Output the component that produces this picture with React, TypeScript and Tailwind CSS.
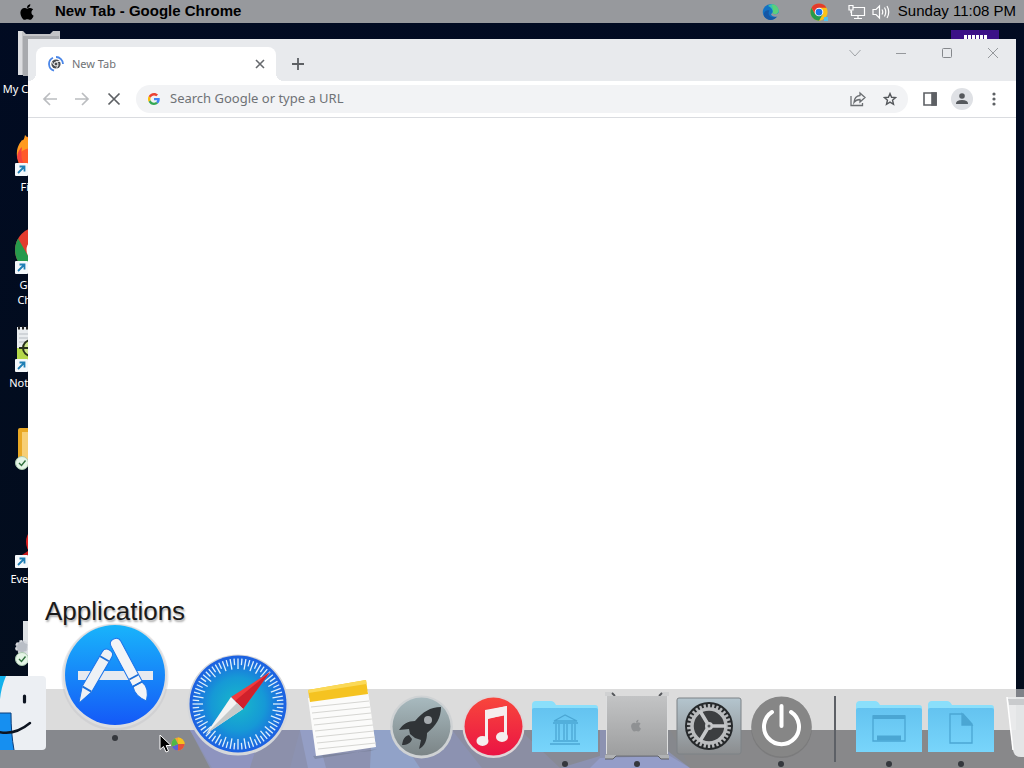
import { ReactNode, useState } from 'react';
import { FaApple } from 'react-icons/fa';

const ticks = Array.from({ length: 72 }, (_, i) => i * 5);
const teeth = Array.from({ length: 30 }, (_, i) => i * 12);

function ChromeLogo({ className }: { className?: string }) {
  return (
    <svg viewBox="0 0 48 48" className={className} aria-hidden="true">
      <circle cx="24" cy="24" r="23" fill="#fbc116" />
      <path d="M24 24 L4.1 12.5 A23 23 0 0 1 43.9 12.5 L24 12.5 Z" fill="#e33b2e" />
      <path d="M4.1 12.5 A23 23 0 0 0 24 47 L34 29.8 L24 24 L14 29.8 Z" fill="#269a4c" />
      <path d="M4.1 12.5 L14 29.8 L24 13 Z" fill="#e33b2e" />
      <circle cx="24" cy="24" r="11.5" fill="#fff" />
      <circle cx="24" cy="24" r="9" fill="#1a73e8" />
    </svg>
  );
}

function EdgeLogo({ className }: { className?: string }) {
  return (
    <svg viewBox="0 0 24 24" className={className} aria-hidden="true">
      <circle cx="11.5" cy="12" r="10.5" fill="#1272c4" />
      <path d="M8 4 C12 0 20 1 22 8 C24 13 20 16 16 15 C13 14 15 12 14 10 C13 7 11 5 8 4Z" fill="#35c1b1" />
      <path d="M13 2 C20 2 24 9 21 13 C19 16 15 15 14 13 C16 10 14 5 13 2Z" fill="#5bd07a" />
      <path d="M10 10 C7 14 10 20 17 19 L20 18 C16 24 7 24 3 18 C1 13 5 8 10 10Z" fill="#1557a5" />
      <path d="M14 13 C15 15.500 19 16 22.500 13 L23.500 16 C20 19.500 13 19 12 15Z" fill="#97999d" />
    </svg>
  );
}

function GoogleG() {
  return (
    <svg viewBox="0 0 48 48" className="size-3 shrink-0" aria-hidden="true">
      <path fill="#EA4335" d="M24 9.500c3.500 0 6.700 1.200 9.200 3.600l6.900-6.900C35.900 2.400 30.500 0 24 0 14.600 0 6.500 5.400 2.600 13.200l8 6.200C12.400 13.700 17.700 9.500 24 9.500z" />
      <path fill="#4285F4" d="M47 24.600c0-1.600-.2-3.100-.4-4.600H24v9h12.900c-.6 3-2.300 5.500-4.800 7.200l7.700 6C44.400 38 47 32 47 24.600z" />
      <path fill="#FBBC05" d="M10.500 28.600c-.5-1.500-.8-3-.8-4.600s.3-3.100.8-4.600l-8-6.200C.9 16.500 0 20.100 0 24s.9 7.500 2.600 10.800z" />
      <path fill="#34A853" d="M24 48c6.500 0 11.900-2.100 15.900-5.800l-7.700-6c-2.200 1.500-4.900 2.300-8.200 2.300-6.300 0-11.600-4.200-13.500-9.900l-8 6.200C6.500 42.600 14.600 48 24 48z" />
    </svg>
  );
}

function ShortcutArrow() {
  return (
    <g>
      <rect x="1" y="35" width="13" height="13" rx="1" fill="#f4f8fb" />
      <path d="M4 45 L10 39 M5.500 38.500 H10.500 V43.500" stroke="#1f7fb5" strokeWidth="1.800" fill="none" />
    </g>
  );
}

function SyncBadge() {
  return (
    <g>
      <circle cx="8" cy="41" r="6.500" fill="#e4f5e6" stroke="#a9c9ae" />
      <path d="M5 41 L7.500 43.500 L11.500 38.500" stroke="#2f6e3c" strokeWidth="1.400" fill="none" />
    </g>
  );
}

const desktopItems: { label: string; art: ReactNode }[] = [
  {
    label: 'My Computer',
    art: (
      <g>
        <path d="M4 1 h5 l3 3 h24 l3 -3 h7 v44 h-42z" fill="#c3c4c7" />
        <path d="M9 6 h36 v40 h-36z" fill="#a8aaae" />
        <path d="M4 1 h4 v44 h-4z" fill="#dcdde0" />
      </g>
    ),
  },
  {
    label: 'Firefox',
    art: (
      <g>
        <circle cx="24" cy="27" r="21" fill="#ff5a2a" />
        <path d="M3 29 C2 19 6 15 8 12 C9 13 10 12 11 7 L16 12 V20 Q6 22 3 29Z" fill="#ff9a1f" />
        <path d="M3 29 Q4 22 8 19 Q6 30 10 36 Q4 34 3 29Z" fill="#f5423f" />
        <ShortcutArrow />
      </g>
    ),
  },
  {
    label: 'Google Chrome',
    art: (
      <g>
        <circle cx="24" cy="24" r="23" fill="#e33b2e" />
        <path d="M4.100 12.500 A23 23 0 0 0 24 47 L34 29.800 L14 29.800 Z" fill="#269a4c" />
        <circle cx="24" cy="24" r="11.500" fill="#fff" />
        <ShortcutArrow />
      </g>
    ),
  },
  {
    label: 'Notepad++',
    art: (
      <g>
        <rect x="3" y="3" width="38" height="41" fill="#e9ecef" />
        <path d="M4 4 h36" stroke="#222" strokeWidth="3" strokeDasharray="2 2" />
        <path d="M5 10 h34 M5 14 h34 M5 18 h34" stroke="#b7bcc2" />
        <path d="M3 24 h38 v20 h-38z" fill="#b4d84a" />
        <circle cx="17" cy="24" r="8" fill="#cde58a" stroke="#27301a" strokeWidth="2" />
        <path d="M5 24 h14" stroke="#27301a" strokeWidth="2" />
        <ShortcutArrow />
      </g>
    ),
  },
  {
    label: '',
    art: (
      <g>
        <rect x="4" y="6" width="40" height="38" rx="2" fill="#e9a825" />
        <rect x="8" y="10" width="36" height="30" fill="#f7cf76" />
        <SyncBadge />
      </g>
    ),
  },
  {
    label: 'Everything',
    art: (
      <g>
        <circle cx="29" cy="22" r="17" fill="#e02020" />
        <path d="M8 35 L14 31 V38 H8z" fill="#c81a1a" />
        <ShortcutArrow />
      </g>
    ),
  },
  {
    label: '',
    art: (
      <g>
        <rect x="9" y="3" width="34" height="42" fill="#dfe2e6" />
        <circle cx="8" cy="29" r="6" fill="#b9bec6" strokeDasharray="3 2" stroke="#d5d8dd" strokeWidth="2" />
        <SyncBadge />
      </g>
    ),
  },
];

function FinderIcon() {
  return (
    <svg viewBox="0 0 76 76" className="size-[76px]">
      <rect x="1" y="0" width="74" height="74" rx="4" fill="#eceff3" />
      <path d="M1 0 H35 C29 14 28 27 29 37 H39 C39 51 40 63 42 74 H1Z" fill="#12b1ec" />
      <path d="M1 37 H40 C40 51 41 63 43 74 H1Z" fill="#168ff0" />
      <path d="M29 37 H40 C40 51 41 63 43 74" fill="none" stroke="#0d3f7a" strokeWidth="1" />
      <path d="M12 48 Q36 66 59 47" fill="none" stroke="#0d1420" strokeWidth="2.400" strokeLinecap="round" />
      <path d="M53.500 20 V26" stroke="#0d1420" strokeWidth="3.200" strokeLinecap="round" />
    </svg>
  );
}

function AppStoreIcon() {
  return (
    <svg viewBox="0 0 108 108" className="mb-[3px] size-[108px]">
      <defs>
        <linearGradient id="store" x1="0" y1="0" x2="0" y2="1">
          <stop offset="0" stopColor="#19b4fb" />
          <stop offset="1" stopColor="#1459f7" />
        </linearGradient>
      </defs>
      <circle cx="54" cy="54" r="53.500" fill="#b9bbbf" opacity="0.300" />
      <circle cx="54" cy="53" r="52" fill="#dcdddf" />
      <circle cx="54" cy="52" r="50" fill="url(#store)" />
      <rect x="17" y="48" width="75" height="9" fill="#e6eaf0" />
      <g stroke="#1b74ea" strokeWidth="1">
        <g transform="translate(48 28) rotate(30)">
          <path d="M-5.500 4 Q-5.500 -1 0 -1 Q5.500 -1 5.500 4 V44 L0.500 59 H-0.500 L-5.500 44Z" fill="#eef1f5" />
          <path d="M-5 9 H5 M-5 44 H5" stroke="#1d6fd8" strokeWidth="1.800" />
        </g>
        <g transform="translate(53 17) rotate(-28)">
          <path d="M-5.500 4 Q-5.500 -1 0 -1 Q5.500 -1 5.500 4 V50 H-5.500Z" fill="#f2f4f7" />
          <path d="M-5 50 H5 Q9 59 0 69 Q-8 59 -5 50Z" fill="#f2f4f7" />
          <path d="M-5 42 H5 M-5 50 H5" stroke="#1d6fd8" strokeWidth="1.800" />
        </g>
      </g>
    </svg>
  );
}

function SafariIcon() {
  return (
    <svg viewBox="0 0 102 102" className="size-[102px]">
      <defs>
        <radialGradient id="safari">
          <stop offset="0" stopColor="#18b9c9" />
          <stop offset="0.550" stopColor="#1699d6" />
          <stop offset="1" stopColor="#1d5fe2" />
        </radialGradient>
      </defs>
      <circle cx="51" cy="51" r="50.500" fill="#d5d7da" />
      <circle cx="51" cy="50" r="48.500" fill="url(#safari)" />
      {ticks.map((deg) => (
        <line
          key={deg}
          x1="51"
          y1="4.500"
          x2="51"
          y2={deg % 10 ? 11 : 15}
          stroke="#dff0fb"
          strokeWidth="1.300"
          transform={`rotate(${deg} 51 50)`}
        />
      ))}
      <path d="M83 18 L44 43 L56 55Z" fill="#f03a3c" />
      <path d="M83 18 L48 47 L56 55Z" fill="#d0212b" />
      <path d="M19 80 L44 43 L56 55Z" fill="#f3f3f3" />
      <path d="M19 80 L50 49 L56 55Z" fill="#c6caca" />
    </svg>
  );
}

function NotesIcon() {
  return (
    <svg viewBox="0 0 80 80" className="size-20">
      <path d="M10 76 L68 71 L74 69 L12 79Z" fill="#5b6270" opacity="0.300" />
      <path d="M5 18 L65 11 L73 67 L13 76Z" fill="#fbfbfa" />
      <path d="M5 10 L63 0 L65 14 L7 22Z" fill="#f5c321" />
      <path d="M5 10 L63 0 L63.500 4 L5.500 13Z" fill="#fbd957" />
      {[0, 1, 2, 3, 4, 5, 6, 7].map((n) => (
        <path key={n} d={`M${8 + n} ${27 + n * 6} L${66 + n} ${21 + n * 6}`} stroke="#d6d6d3" strokeWidth="1" />
      ))}
    </svg>
  );
}

function LaunchpadIcon() {
  return (
    <svg viewBox="0 0 72 72" className="size-[72px]">
      <defs>
        <linearGradient id="pad" x1="0" y1="0" x2="0" y2="1">
          <stop offset="0" stopColor="#a8babf" />
          <stop offset="1" stopColor="#7b8486" />
        </linearGradient>
      </defs>
      <circle cx="36.500" cy="39" r="31.500" fill="#cfd2d4" />
      <circle cx="36.500" cy="38.500" r="29" fill="url(#pad)" />
      <path d="M56 19 C45 19 38 24 30 33 C23 33 18 36 14 42 L24 41 L25 46 L30 50 L36 52 L34 61 C40 58 42 52 42 45 C51 38 56 30 56 19Z" fill="#303437" />
      <path d="M24 47 C18 49 18 53 17 57 C22 57 26 55 27 51Z" fill="#303437" />
      <circle cx="43" cy="32" r="4" fill="#a5aaae" />
    </svg>
  );
}

function MusicIcon() {
  return (
    <svg viewBox="0 0 72 72" className="size-[72px]">
      <defs>
        <linearGradient id="music" x1="0" y1="0" x2="0" y2="1">
          <stop offset="0" stopColor="#f8463c" />
          <stop offset="1" stopColor="#ea1444" />
        </linearGradient>
      </defs>
      <circle cx="36.500" cy="39" r="31" fill="#ded6d8" />
      <circle cx="36.500" cy="38.500" r="29" fill="url(#music)" />
      <path d="M28 23 L50 18 V49 H47 V27 L31 31 V53 H28Z" fill="#f5eeee" />
      <path d="M28 22 L50 18 V27 L28 31Z" fill="#f5eeee" />
      <ellipse cx="25.500" cy="53" rx="6" ry="5" fill="#f5eeee" />
      <ellipse cx="45" cy="49" rx="6" ry="5" fill="#f5eeee" />
    </svg>
  );
}

function Folder({ children }: { children: ReactNode }) {
  return (
    <svg viewBox="0 0 72 72" className="size-[72px]">
      <defs>
        <linearGradient id="folder" x1="0" y1="0" x2="0" y2="1">
          <stop offset="0" stopColor="#64c3f0" />
          <stop offset="1" stopColor="#78d5fb" />
        </linearGradient>
      </defs>
      <path d="M3 17 Q3 13 7 13 H22 Q25 13 27 17 H66 Q69 17 69 20 V62 H3Z" fill="#8adffb" />
      <path d="M3 22 Q3 20 5 20 H67 Q69 20 69 22 V64 H3Z" fill="url(#folder)" />
      <g stroke="#4ba6d3" strokeWidth="1.300" fill="none">
        {children}
      </g>
    </svg>
  );
}

function MacProIcon() {
  return (
    <svg viewBox="0 0 72 72" className="size-[72px]">
      <defs>
        <linearGradient id="tower" x1="0" y1="0" x2="0" y2="1">
          <stop offset="0" stopColor="#c3c4c5" />
          <stop offset="1" stopColor="#9d9e9f" />
        </linearGradient>
      </defs>
      <path d="M4 4 H12 L14 8 H58 L60 4 H68 V8 H4Z" fill="#d0d1d2" />
      <path d="M11 5 L14 8 M61 5 L58 8" stroke="#55575b" strokeWidth="1.800" />
      <rect x="5" y="8" width="62" height="59" fill="url(#tower)" />
      <path d="M5.500 8 V66 M66.500 8 V66" stroke="#dddedf" strokeWidth="1" />
      <path d="M4 71 V67 H68 V71 H60 L57 68 H15 L12 71Z" fill="#b0b2b4" />
      <path d="M4 71 H12 L15 68 H57 L60 71 H68" stroke="#5c5e62" strokeWidth="1" fill="none" />
      <g transform="translate(30 31) scale(0.026)" fill="#8f9193">
        <path d="M318.700 268.700c-.2-36.700 16.400-64.400 50-84.800-18.800-26.900-47.200-41.700-84.700-44.600-35.500-2.800-74.300 20.700-88.500 20.700-15 0-49.400-19.700-76.400-19.700C63.300 141.200 4 184.800 4 273.500q0 39.300 14.400 81.200c12.800 36.700 59 126.700 107.200 125.200 25.200-.6 43-17.900 75.800-17.900 31.800 0 48.300 17.900 76.400 17.900 48.600-.7 90.400-82.500 102.600-119.300-65.200-30.700-61.700-90-61.700-91.900zm-56.600-164.200c27.300-32.400 24.800-61.900 24-72.500-24.100 1.400-52 16.400-67.900 34.900-17.500 19.800-27.800 44.300-25.600 71.900 26.100 2 49.900-11.400 69.500-34.300z" />
      </g>
    </svg>
  );
}

function SettingsIcon() {
  return (
    <svg viewBox="0 0 72 72" className="size-[72px]">
      <defs>
        <linearGradient id="prefs" x1="0" y1="0" x2="0" y2="1">
          <stop offset="0" stopColor="#b4c5ce" />
          <stop offset="1" stopColor="#8b8d8f" />
        </linearGradient>
      </defs>
      <rect x="4" y="10" width="64" height="56" rx="2" fill="url(#prefs)" stroke="#7d8286" />
      <circle cx="36" cy="38" r="24" fill="#25282a" />
      {teeth.map((deg) => (
        <rect key={deg} x="34.800" y="16" width="2.400" height="6" fill="#b5b7b9" transform={`rotate(${deg} 36 38)`} />
      ))}
      <circle cx="36" cy="38" r="17" fill="#3c3e40" stroke="#babcbe" strokeWidth="3.500" />
      <path d="M36 38 H53 M36 38 L27 23 M36 38 L27 53" stroke="#c6c8ca" strokeWidth="3.500" />
      <circle cx="36" cy="38" r="4" fill="#c6c8ca" />
      <circle cx="36" cy="38" r="1.500" fill="#55585a" />
    </svg>
  );
}

function PowerIcon() {
  return (
    <svg viewBox="0 0 72 72" className="size-[72px]">
      <circle cx="36.500" cy="39.500" r="30.500" fill="#6d6d6e" opacity="0.500" />
      <circle cx="36.500" cy="38.500" r="30" fill="#868686" />
      <path d="M27 24 A17.500 17.500 0 1 0 46 24" fill="none" stroke="#fff" strokeWidth="4" strokeLinecap="round" />
      <path d="M36.500 18 V38" stroke="#fff" strokeWidth="4" strokeLinecap="round" />
    </svg>
  );
}

function TrashIcon() {
  return (
    <svg viewBox="0 0 72 72" className="size-[72px]">
      <path d="M10 9 H62 L56 64 Q54 69 48 69 H24 Q17 69 16 62Z" fill="#e9eaeb" opacity="0.950" />
      <path d="M11 11 H61 L60 17 H12Z" fill="#c9cbcd" />
      <path d="M10 9 L16 62" stroke="#fff" strokeWidth="1.500" />
    </svg>
  );
}

interface DockEntry {
  name: string;
  slot: string;
  icon: ReactNode;
  open?: boolean;
}

const apps: DockEntry[] = [
  { name: 'Finder', slot: 'w-[90px] pb-2', icon: <FinderIcon /> },
  { name: 'Applications', slot: 'w-[122px] pb-[26px]', icon: <AppStoreIcon />, open: true },
  { name: 'Safari', slot: 'w-[124px] pb-1', icon: <SafariIcon /> },
  { name: 'Notes', slot: 'w-[85px]', icon: <NotesIcon /> },
  { name: 'Launchpad', slot: 'w-[72px]', icon: <LaunchpadIcon /> },
  { name: 'iTunes', slot: 'w-[72px]', icon: <MusicIcon /> },
  {
    name: 'Library',
    slot: 'w-[72px]',
    open: true,
    icon: (
      <Folder>
        <path d="M36 27 L25 33 H48Z M24 35 H49 M27 36 V52 M30 36 V52 M35 36 V52 M38 36 V52 M43 36 V52 M46 36 V52 M24 53 H49 M21 56 H51" />
      </Folder>
    ),
  },
  { name: 'Computer', slot: 'w-[72px]', icon: <MacProIcon />, open: true },
  { name: 'System Preferences', slot: 'w-[72px]', icon: <SettingsIcon /> },
  { name: 'Power', slot: 'w-[72px]', icon: <PowerIcon />, open: true },
];

const places: DockEntry[] = [
  {
    name: 'Desktop',
    slot: 'w-[72px]',
    open: true,
    icon: (
      <Folder>
        <path d="M20 28 H52 V53 H20Z" />
        <path d="M20 29 H52" strokeWidth="4" />
        <path d="M24 50 H48" strokeWidth="5" />
      </Folder>
    ),
  },
  {
    name: 'Documents',
    slot: 'w-[72px]',
    open: true,
    icon: (
      <Folder>
        <path d="M25 26 H38 L47 36 V55 H25Z" />
        <path d="M37 26 V37 H47Z" fill="#4ba6d3" />
      </Folder>
    ),
  },
  { name: 'Trash', slot: 'w-[72px]', icon: <TrashIcon /> },
];

function DockItem({ item, active, onHover }: { item: DockEntry; active: boolean; onHover: (name: string) => void }) {
  return (
    <button
      type="button"
      aria-label={item.name}
      onMouseEnter={() => onHover(item.name)}
      className={`relative flex shrink-0 flex-col items-center ${item.slot}`}
    >
      {active && (
        <span className="absolute bottom-full left-1/2 -mb-1 -translate-x-1/2 text-[26px] leading-8 text-[#1a1a1a] [text-shadow:1px_2px_2px_#aaa]">
          {item.name}
        </span>
      )}
      {item.icon}
      <span className="flex h-2 items-center">
        {item.open && <span className="size-1.5 rounded-full bg-[#35383d]" />}
      </span>
    </button>
  );
}

function MenuBar() {
  return (
    <header className="relative flex h-[23px] items-center bg-[#97999d] pr-2 pl-[18px] text-[15px] text-black">
      <FaApple className="size-[18px]" />
      <h1 className="ml-[19px] font-bold">New Tab - Google Chrome</h1>
      <div className="ml-auto flex items-center">
        <EdgeLogo className="mr-[30px] size-[18px]" />
        <span className="relative mr-5">
          <ChromeLogo className="size-[18px]" />
          <span className="absolute right-0 bottom-0 size-1 bg-[#4cc3f0]" />
        </span>
        <svg viewBox="0 0 18 16" className="mr-1.5 h-4 w-[18px]" fill="none" stroke="#fff" strokeWidth="1.200">
          <path d="M5 3.500 H16.500 V11.500 H3.500 V7 M10 11.500 V14 M6 14.500 H14 M1 1.500 H5 V6 H1Z M3 6 V9" />
        </svg>
        <svg viewBox="0 0 18 16" className="mr-2 h-4 w-[18px]" fill="none" stroke="#fff" strokeWidth="1.200">
          <path d="M1 5.500 H4 L7.500 2 V14 L4 10.500 H1Z M10 5.500 Q11.500 8 10 10.500 M12.500 3.500 Q15 8 12.500 12.500 M15 2 Q18.500 8 15 14" />
        </svg>
        <time>Sunday 11:08 PM</time>
      </div>
    </header>
  );
}

function BrowserWindow() {
  const [url, setUrl] = useState('');
  const control = 'flex h-7 w-[46px] items-center justify-center';
  const tool = 'flex size-8 shrink-0 items-center justify-center';

  return (
    <main className="absolute top-[39px] right-2 bottom-[38px] left-7 flex flex-col bg-white font-['Noto_Sans','Open_Sans',sans-serif] text-[13px] text-[#6f7276]">
      <div className="flex h-[42px] shrink-0 bg-[#e8eaed] pl-2">
        <div className="relative mt-2 flex w-60 items-center rounded-t-lg bg-white pr-2 pl-3">
          <span className="absolute bottom-0 -left-2 size-2 bg-[radial-gradient(circle_at_0_0,#e8eaed_8px,#fff_8px)]" />
          <span className="absolute -right-2 bottom-0 size-2 bg-[radial-gradient(circle_at_100%_0,#e8eaed_8px,#fff_8px)]" />
          <svg viewBox="0 0 16 16" className="size-4" fill="none">
            <path d="M8 1 A7 7 0 0 1 15 8 M6 14.700 A7 7 0 0 1 5 1.700" stroke="#4a86e8" strokeWidth="1.800" />
            <circle cx="8" cy="8" r="4.600" fill="#4a4d51" />
            <circle cx="8" cy="8" r="2" fill="#4a4d51" stroke="#fff" />
            <path d="M8 5.500 H12 M5.800 9.200 L3.900 6 M10.200 9.200 L8.300 12.500" stroke="#fff" strokeWidth="0.800" />
          </svg>
          <span className="ml-2 text-[11px]">New Tab</span>
          <button type="button" aria-label="Close tab" className="ml-auto flex size-4 items-center justify-center">
            <svg viewBox="0 0 10 10" className="size-2.5" stroke="#66696d" strokeWidth="1.600">
              <path d="M1 1 L9 9 M9 1 L1 9" />
            </svg>
          </button>
        </div>
        <button type="button" aria-label="New tab" className="mt-2 ml-2 flex w-7 items-center justify-center">
          <svg viewBox="0 0 12 12" className="size-3" stroke="#5d6064" strokeWidth="1.800">
            <path d="M6 0 V12 M0 6 H12" />
          </svg>
        </button>
        <div className="ml-auto flex">
          <button type="button" aria-label="Search tabs" className={control}>
            <svg viewBox="0 0 12 12" className="size-3" fill="none" stroke="#a0a3a7">
              <path d="M0.500 3 L6 9 L11.500 3" />
            </svg>
          </button>
          <button type="button" aria-label="Minimize" className={control}>
            <svg viewBox="0 0 10 10" className="size-2.5" stroke="#95989c">
              <path d="M0 5.500 H10" />
            </svg>
          </button>
          <button type="button" aria-label="Maximize" className={control}>
            <svg viewBox="0 0 10 10" className="size-2.5" fill="none" stroke="#85888c">
              <rect x="0.500" y="0.500" width="9" height="9" rx="1" />
            </svg>
          </button>
          <button type="button" aria-label="Close" className={control}>
            <svg viewBox="0 0 12 12" className="size-3" stroke="#95989c">
              <path d="M1 1 L11 11 M11 1 L1 11" />
            </svg>
          </button>
        </div>
      </div>

      <div className="flex h-[37px] shrink-0 items-center border-b border-[#dadce0] px-1.5">
        <button type="button" aria-label="Back" className={tool}>
          <svg viewBox="0 0 16 16" className="size-4" fill="none" stroke="#bbbdc0" strokeWidth="1.700">
            <path d="M15 8 H2 M8 2 L2 8 L8 14" />
          </svg>
        </button>
        <button type="button" aria-label="Forward" className={tool}>
          <svg viewBox="0 0 16 16" className="size-4" fill="none" stroke="#bbbdc0" strokeWidth="1.700">
            <path d="M1 8 H14 M8 2 L14 8 L8 14" />
          </svg>
        </button>
        <button type="button" aria-label="Stop" className={tool}>
          <svg viewBox="0 0 14 14" className="size-3.5" stroke="#5d6064" strokeWidth="1.700">
            <path d="M1.500 1.500 L12.500 12.500 M12.500 1.500 L1.500 12.500" />
          </svg>
        </button>
        <div className="mx-1.5 flex h-7 min-w-0 flex-1 items-center rounded-full bg-[#f2f3f5] pr-0.5 pl-3">
          <GoogleG />
          <input
            type="text"
            aria-label="Address"
            placeholder="Search Google or type a URL"
            value={url}
            onChange={(e) => setUrl(e.target.value)}
            className="mr-2 ml-2.5 min-w-0 flex-1 bg-transparent outline-none placeholder:text-[#6f7276]"
          />
          <button type="button" aria-label="Share" className={tool}>
            <svg viewBox="0 0 16 16" className="size-4" fill="none" stroke="#6b6e72" strokeWidth="1.300">
              <path d="M1 5 V14.500 H12.500 V12 M10 2 L15 6.500 L10 11 V8.500 Q6 8.500 4 11.500 Q4.500 5 10 4.500Z" />
            </svg>
          </button>
          <button type="button" aria-label="Bookmark" className={tool}>
            <svg viewBox="0 0 16 16" className="size-3.5" fill="none" stroke="#55585c" strokeWidth="1.600">
              <path d="M8 1.800 L9.800 6 L14.400 6.400 L10.900 9.400 L12 14 L8 11.500 L4 14 L5.100 9.400 L1.600 6.400 L6.200 6Z" />
            </svg>
          </button>
        </div>
        <button type="button" aria-label="Side panel" className={tool}>
          <svg viewBox="0 0 14 14" className="size-3.5" fill="none" stroke="#5d6064" strokeWidth="1.600">
            <path d="M1 1 H13 V13 H1Z" />
            <path d="M9 1 H13 V13 H9Z" fill="#5d6064" />
          </svg>
        </button>
        <button type="button" aria-label="Profile" className={tool}>
          <svg viewBox="0 0 22 22" className="size-[22px]">
            <circle cx="11" cy="11" r="11" fill="#dfe1e5" />
            <circle cx="11" cy="8" r="2.800" fill="#55585c" />
            <path d="M5 15.500 Q5 12 11 12 Q17 12 17 15.500 V16 H5Z" fill="#55585c" />
          </svg>
        </button>
        <button type="button" aria-label="Menu" className={tool}>
          <svg viewBox="0 0 4 14" className="h-3.5 w-1" fill="#5d6064">
            <circle cx="2" cy="2" r="1.600" />
            <circle cx="2" cy="7" r="1.600" />
            <circle cx="2" cy="12" r="1.600" />
          </svg>
        </button>
      </div>
    </main>
  );
}

export default function App() {
  const [hovered, setHovered] = useState('Applications');

  return (
    <div className="relative h-screen overflow-hidden bg-[#020c1f] bg-linear-to-b from-[#010b22] to-[#030d1c] font-['Liberation_Sans',Arial,sans-serif]">
      {/* Lower edge of the wallpaper, seen through the dock */}
      <svg viewBox="0 0 1024 38" preserveAspectRatio="none" className="absolute bottom-0 h-[38px] w-full">
        <rect width="1024" height="38" fill="#171d2a" />
        <path d="M190 0 H640 L690 38 H210Z" fill="#27388a" />
        <path d="M190 0 H262 L250 38 H212Z" fill="#2c3db0" />
        <path d="M262 0 H300 L290 38 H250Z" fill="#26327a" />
        <path d="M300 0 H316 L326 38 H308Z" fill="#3d57c0" />
        <path d="M372 0 H395 L420 38 H370Z" fill="#3463c9" />
        <path d="M452 0 H540 L560 38 H482Z" fill="#252c66" />
        <path d="M520 0 H600 V26 L560 38Z" fill="#1d2140" />
        <path d="M600 28 L670 26 L690 38 H590Z" fill="#3c54c8" />
        <path d="M670 0 H1024 V38 H690Z" fill="#1b1d23" />
      </svg>

      <MenuBar />

      <ul className="absolute top-[30px] left-0 flex w-[76px] flex-col font-['Noto_Sans','Open_Sans',sans-serif] text-[11px] leading-[15px] text-white">
        {desktopItems.map((item, i) => (
          <li key={i} className="flex h-[98px] flex-col items-center gap-[3px] text-center">
            <svg viewBox="0 0 48 48" className="size-12 shrink-0">
              {item.art}
            </svg>
            <span>{item.label}</span>
          </li>
        ))}
      </ul>
      <div className="absolute top-[30px] right-[25px] flex h-12 w-12 justify-center bg-[#3b1187] pt-[5px]">
        <span className="h-4 w-[23px] bg-[repeating-linear-gradient(90deg,#fff_0_3px,#3b1187_3px_4px)]" />
      </div>

      <BrowserWindow />

      <nav aria-label="Dock" className="absolute inset-x-0 bottom-0 flex h-[79px] items-end bg-[rgba(200,200,200,0.63)]">
        <div className="-ml-9 flex shrink-0 items-end">
          {apps.map((item) => (
            <DockItem key={item.name} item={item} active={hovered === item.name} onHover={setHovered} />
          ))}
          <span className="mx-[17px] mb-1.5 h-[66px] w-0.5 shrink-0 bg-[#5d6066]" />
          {places.map((item) => (
            <DockItem key={item.name} item={item} active={hovered === item.name} onHover={setHovered} />
          ))}
        </div>
      </nav>

      {/* Pointer with the busy ball */}
      <svg viewBox="0 0 28 20" className="pointer-events-none absolute bottom-[14px] left-[158px] h-5 w-7">
        <path d="M2 1 V15.500 L5.500 12.500 L8 18 L10.500 17 L8.200 11.500 H13Z" fill="#000" stroke="#fff" />
        <circle cx="20" cy="10" r="6.500" fill="#f2a33a" />
        <path d="M20 10 V3.500 A6.500 6.500 0 0 1 26.500 10Z" fill="#f4c21f" />
        <path d="M20 10 H26.500 A6.500 6.500 0 0 1 20 16.500Z" fill="#e5533a" />
        <path d="M20 10 V16.500 A6.500 6.500 0 0 1 14 12.500Z" fill="#5b62d6" />
        <path d="M20 10 L14 12.500 A6.500 6.500 0 0 1 17 4.200Z" fill="#4fb848" />
      </svg>
    </div>
  );
}
